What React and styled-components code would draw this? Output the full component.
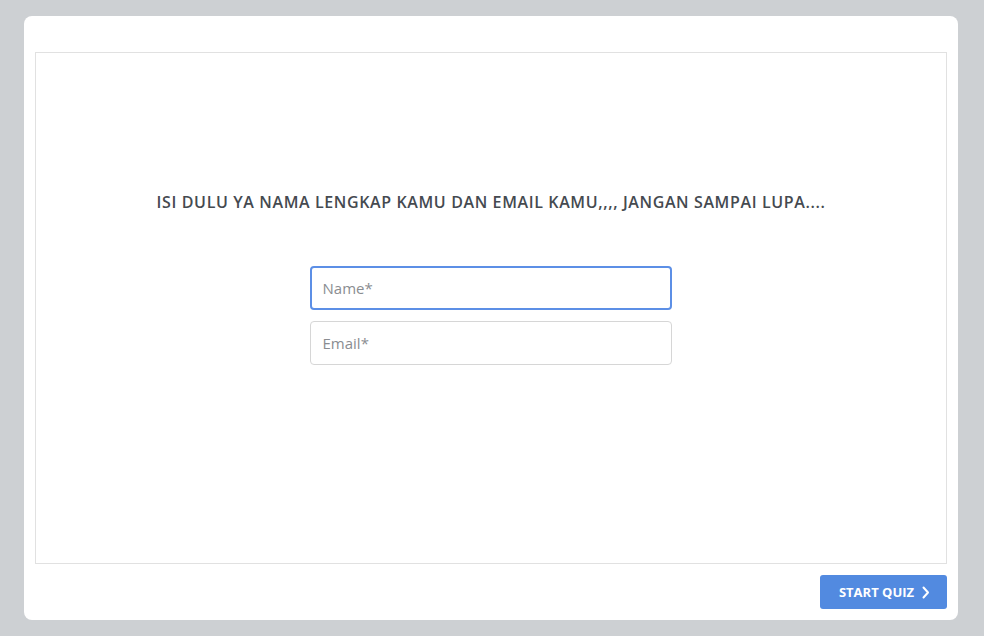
import React from 'react';
import styled, { createGlobalStyle } from 'styled-components';

const GlobalStyle = createGlobalStyle`
  html, body {
    margin: 0;
    padding: 0;
    background: #cdd0d3;
    font-family: 'Open Sans', 'Noto Sans', sans-serif;
  }
  * { box-sizing: border-box; }
`;

const Page = styled.div`
  width: 984px;
  height: 636px;
  padding: 16px 26px 16px 24px;
`;

const Card = styled.main`
  height: 604px;
  background: #fff;
  border-radius: 8px;
  padding: 36px 11px 11px 11px;
  display: flex;
  flex-direction: column;
  gap: 11px;
`;

const Stage = styled.section`
  flex: 1;
  border: 1px solid #e1e1e1;
  display: flex;
  flex-direction: column;
  align-items: center;
  padding-top: 137px;
`;

const Heading = styled.h2`
  margin: 0 0 52px;
  font-size: 16px;
  font-weight: 600;
  color: #454a50;
  letter-spacing: 0.62px;
  line-height: 24px;
`;

const Form = styled.form`
  width: 362px;
  display: flex;
  flex-direction: column;
  gap: 11px;
`;

const Input = styled.input`
  width: 100%;
  height: 44px;
  font-family: 'Open Sans', sans-serif;
  font-size: 15px;
  color: #333;
  border-radius: 4px;
  outline: none;
  background: #fff;
  border: ${(p) => (p.$active ? '2px solid #5c8fe6' : '1px solid #d6d6d6')};
  padding: 0 0 0 ${(p) => (p.$active ? '10.5px' : '11.5px')};

  &::placeholder {
    color: #8a8d91;
  }
`;

const Footer = styled.footer`
  display: flex;
  justify-content: flex-end;
`;

const StartButton = styled.button`
  height: 34px;
  width: 127px;
  border: none;
  border-radius: 3px;
  background: #528ae0;
  color: #fff;
  font-family: 'Open Sans', sans-serif;
  font-weight: 700;
  font-size: 13px;
  display: flex;
  align-items: center;
  justify-content: center;
  gap: 8px;
  padding: 0 0 0 2px;
  cursor: pointer;
`;

export default function App() {
  return (
    <>
      <GlobalStyle />
      <Page>
        <Card>
          <Stage>
            <Heading>ISI DULU YA NAMA LENGKAP KAMU DAN EMAIL KAMU,,,, JANGAN SAMPAI LUPA....</Heading>
            <Form onSubmit={(e) => e.preventDefault()}>
              <Input $active type="text" placeholder="Name*" />
              <Input type="email" placeholder="Email*" />
            </Form>
          </Stage>
          <Footer>
            <StartButton type="button">
              START QUIZ
              <svg width="8" height="13" viewBox="0 0 8 13" fill="none">
                <path d="M1.5 1.5 L6 6.5 L1.5 11.5" stroke="#fff" strokeWidth="2" strokeLinecap="round" strokeLinejoin="round" />
              </svg>
            </StartButton>
          </Footer>
        </Card>
      </Page>
    </>
  );
}
